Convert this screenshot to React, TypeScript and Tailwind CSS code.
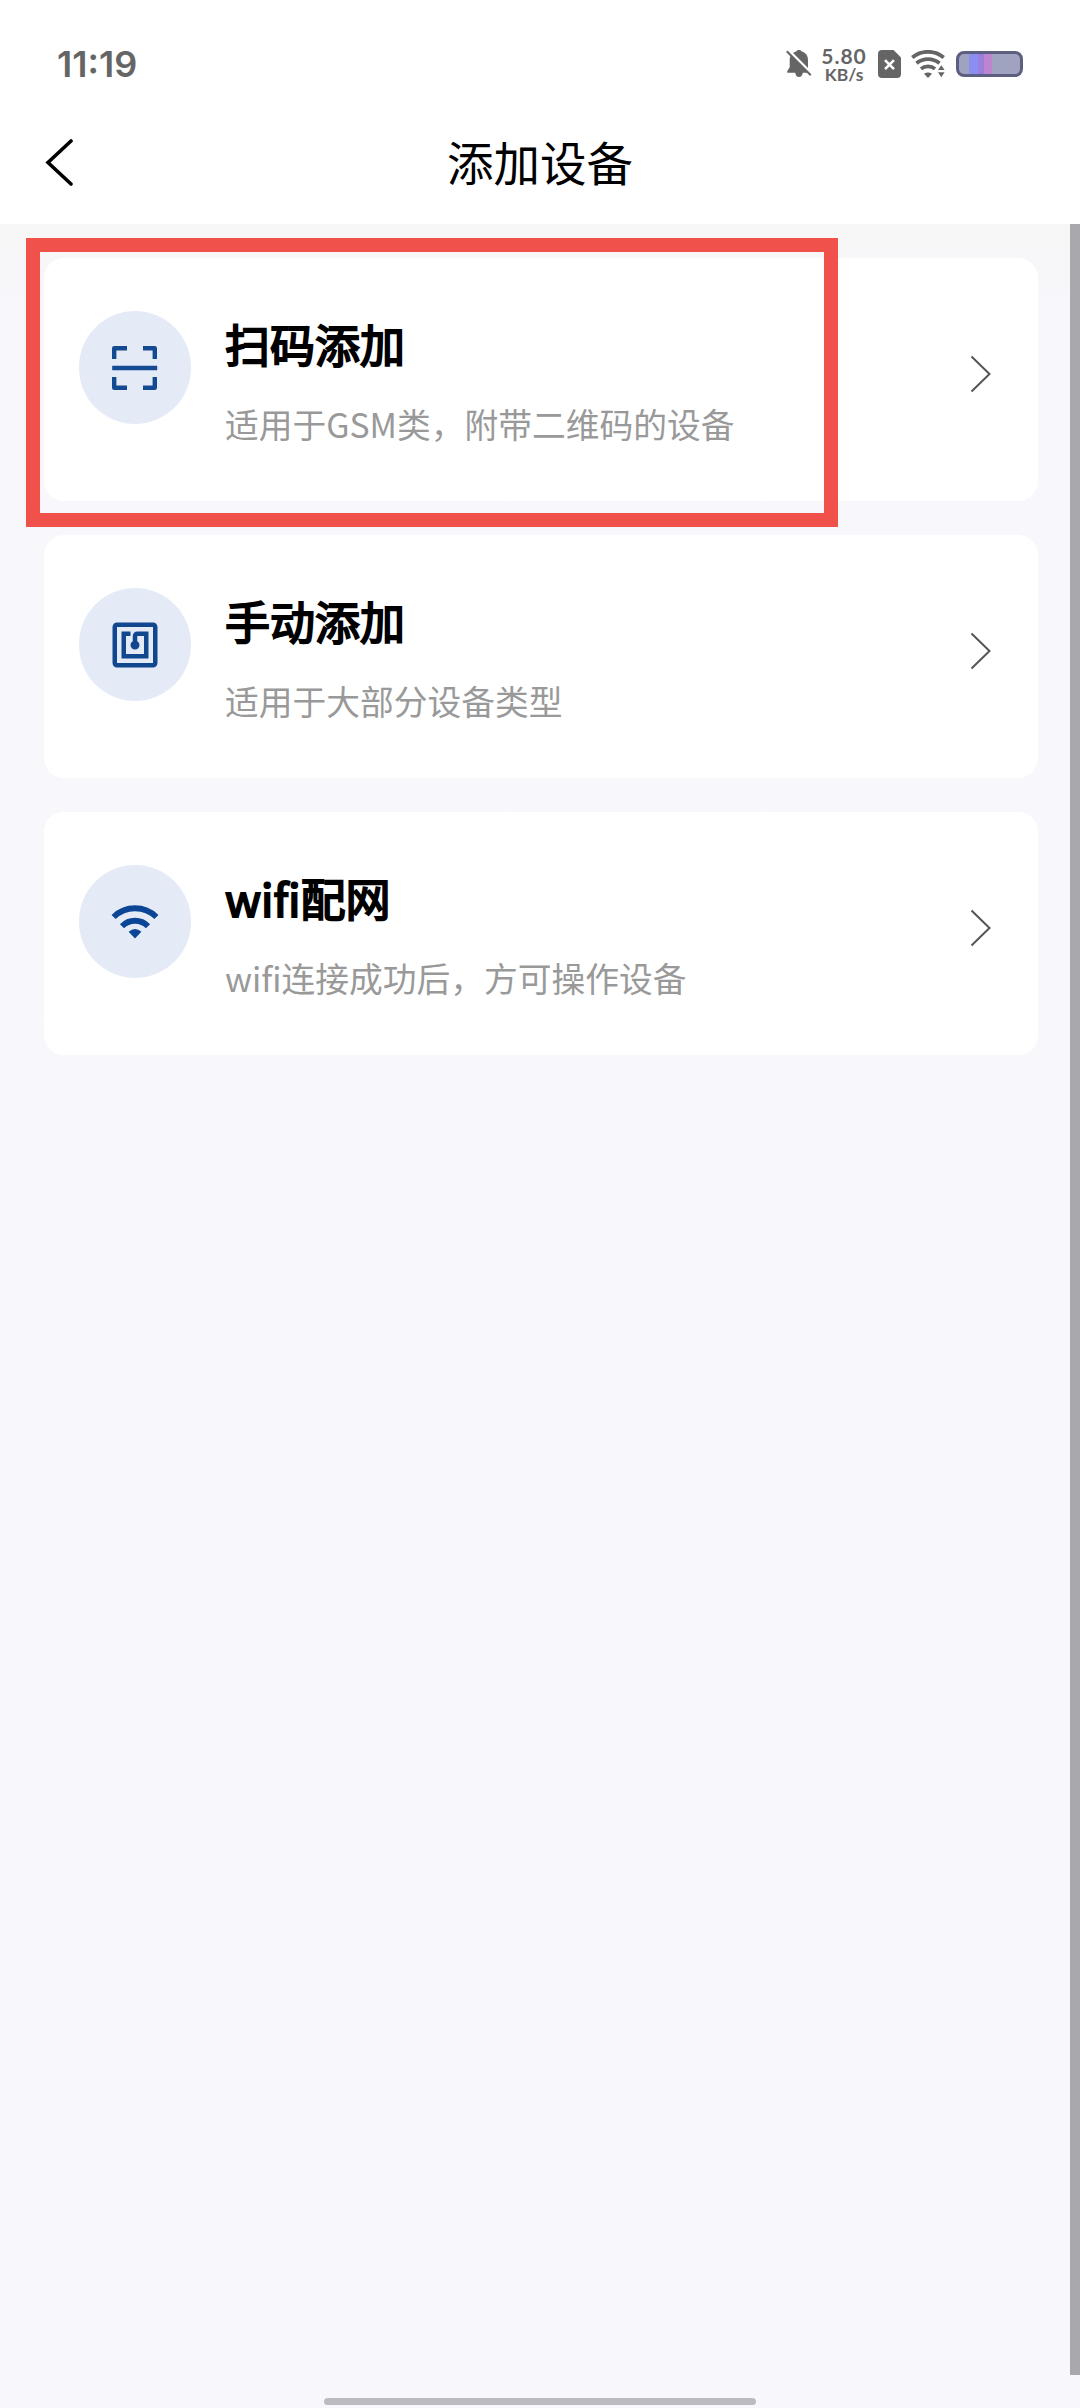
import type { ReactNode } from 'react';

const ScanIcon = () => (
    <svg viewBox="0 0 48 48" className="h-12 w-12" fill="none" stroke="#144a92" strokeWidth="4.4">
        <path d="M3.2 15V4.2H16M32 4.2h11.8V15M3.2 33v10.800H16M32 43.800h11.800V33" strokeLinejoin="round" />
        <path d="M1.200 24h45" />
    </svg>
);

const NfcIcon = () => (
    <svg viewBox="0 0 24 24" className="h-[54px] w-[54px]" fill="#10478f">
        <path d="M20 2H4c-1.1 0-2 .9-2 2v16c0 1.1.9 2 2 2h16c1.1 0 2-.9 2-2V4c0-1.1-.9-2-2-2zm0 18H4V4h16v16zM18 6h-5c-1.1 0-2 .9-2 2v2.280c-.6.350-1 .980-1 1.720 0 1.100.9 2 2 2s2-.9 2-2c0-.740-.4-1.380-1-1.720V8h3v8H8V8h2V6H6v12h12V6z" />
    </svg>
);

const WifiIcon = () => (
    <svg viewBox="0 0 48 36" className="h-9 w-12" fill="none" stroke="#0b4596" strokeWidth="5.8">
        <path d="M2.600 13a30.500 30.500 0 0 1 42.800 0" />
        <path d="M11 22.300a18 18 0 0 1 26 0" />
        <path d="M17.600 27.800q6.400-5.600 12.800 0L24 34.600z" fill="#0b4596" stroke="none" />
    </svg>
);

const BellOffIcon = () => (
    <svg viewBox="0 0 26 30" className="h-[30px] w-[26px]">
        <path
            d="M13 1c-1.500 0-2.400.7-2.800 1.500C6 3.700 3.700 7 3.700 11v7.200L1.300 22v1.700h7.900C9.600 26.400 11 28 13 28s3.400-1.600 3.800-4.300h6.400V22l-1.200-2V11c0-4-2-7.300-6.200-8.500C15.400 1.700 14.500 1 13 1z"
            fill="#656565"
        />
        <path d="M1.500 .5l25 25" stroke="#fff" strokeWidth="3" />
        <path d="M.8 2.200l24 24" stroke="#656565" strokeWidth="2" />
    </svg>
);

const SimIcon = () => (
    <svg viewBox="0 0 23 28" className="h-7 w-[23px]">
        <path d="M4 0h11.500L23 7.500V24a4 4 0 0 1-4 4H4a4 4 0 0 1-4-4V4a4 4 0 0 1 4-4z" fill="#656565" />
        <path d="M7 10.200l9 9M16 10.200l-9 9" stroke="#fff" strokeWidth="2.600" />
    </svg>
);

const SignalIcon = () => (
    <svg viewBox="0 0 34 28" className="h-7 w-[34px]" fill="none" stroke="#656565">
        <path d="M1.300 7.500c9-7.600 22.400-7.600 31.400 0" strokeWidth="3.800" />
        <path d="M5.500 13.300c6.600-5.600 16.400-5.600 23 0" strokeWidth="3.800" />
        <path d="M10 18.900c4-3.400 10-3.400 14 0" strokeWidth="3.800" />
        <path d="M13 23.800q4-2.800 8 0L17 28z" fill="#656565" stroke="none" />
        <path d="M25.500 30V19l5-7 5 4v14z" fill="#fff" stroke="none" />
        <path d="M27 20l3.300-4.800 3.300 4.800zM27 22.200l3.300 5 3.300-5z" fill="#656565" stroke="none" />
    </svg>
);

const StatusBar = () => (
    <div className="flex h-[128px] items-center justify-between pr-[57px] pl-[57px] text-[#656565]">
        <span className="font-['Inter'] text-[36px] leading-none font-semibold">11:19</span>
        <div className="flex items-center">
            <BellOffIcon />
            <div className="ml-[8px] flex w-[48px] flex-col items-center font-['Lato'] font-bold">
                <span className="text-[21px] leading-[21px] tracking-[1px]">5.80</span>
                <span className="text-[17.500px] leading-[18px]">KB/s</span>
            </div>
            <div className="ml-[10px]">
                <SimIcon />
            </div>
            <div className="ml-[10px]">
                <SignalIcon />
            </div>
            <div className="ml-[11px] flex h-[26px] w-[67px] overflow-hidden rounded-[8px] border-[3px] border-[#5d5f80] bg-[#9fa3c0]">
                <div className="ml-[10px] w-[9px] bg-[#8b8df0]" />
                <div className="w-[6px] bg-[#9b7fdc]" />
                <div className="w-[8px] bg-[#bd84cf]" />
            </div>
        </div>
    </div>
);

const NavBar = () => (
    <div className="flex h-[96px] items-start px-[45px] pt-[8px]">
        <svg viewBox="0 0 28 48" className="mt-[2px] h-12 w-7" fill="none" stroke="#000" strokeWidth="3.6">
            <path d="M26 3L3 24.500 26 46" strokeLinecap="round" />
        </svg>
        <h1 className="mr-7 flex-1 text-center text-[46.500px] leading-[50px]">添加设备</h1>
    </div>
);

type Entry = {
    title: string;
    desc: string;
    icon: ReactNode;
};

const entries: Entry[] = [
    { title: '扫码添加', desc: '适用于GSM类，附带二维码的设备', icon: <ScanIcon /> },
    { title: '手动添加', desc: '适用于大部分设备类型', icon: <NfcIcon /> },
    { title: 'wifi配网', desc: 'wifi连接成功后，方可操作设备', icon: <WifiIcon /> },
];

const EntryCard = ({ title, desc, icon }: Entry) => (
    <div className="flex h-[243px] items-start rounded-[20px] bg-white pt-[53px] pr-[46px] pl-[35px]">
        <div className="flex h-[113px] w-[112px] items-center justify-center rounded-full bg-[#e5ebf6]">
            {icon}
        </div>
        <div className="ml-[34px] flex-1 pt-[3px]">
            <h2 className="text-[45px] leading-[60px] font-normal text-black [-webkit-text-stroke:2px_#000]">{title}</h2>
            <p className="mt-[26px] text-[33.750px] leading-[48px] text-[#999]">{desc}</p>
        </div>
        <svg viewBox="0 0 22 38" className="mt-[44px] h-[38px] w-[22px]" fill="none" stroke="#555" strokeWidth="2">
            <path d="M1.500 1.500L19.500 19 1.500 36.500" />
        </svg>
    </div>
);

export default function App() {
    return (
        <div className="relative h-[2408px] w-[1080px] overflow-hidden bg-[#f7f7fc] font-['Noto_Sans_CJK_SC',sans-serif]">
            <header className="bg-white">
                <StatusBar />
                <NavBar />
            </header>
            <main className="flex flex-col gap-[34px] bg-linear-to-b from-[#f7f7f7] to-[#f7f7fc] to-10% pt-[34px] pr-[42px] pl-[44px]">
                {entries.map((entry) => (
                    <EntryCard key={entry.title} {...entry} />
                ))}
            </main>

            {/* highlight around the scan entry */}
            <div className="absolute top-[238px] left-[26px] h-[289px] w-[812px] border-[14px] border-[#f0524b]" />
            {/* scrollbar */}
            <div className="absolute top-[224px] right-0 h-[2151px] w-[10px] bg-[#a9a9ad]" />
            {/* home indicator */}
            <div className="absolute bottom-[3px] left-[324px] h-[7px] w-[432px] rounded-full bg-[#bbbbc0]" />
        </div>
    );
}
